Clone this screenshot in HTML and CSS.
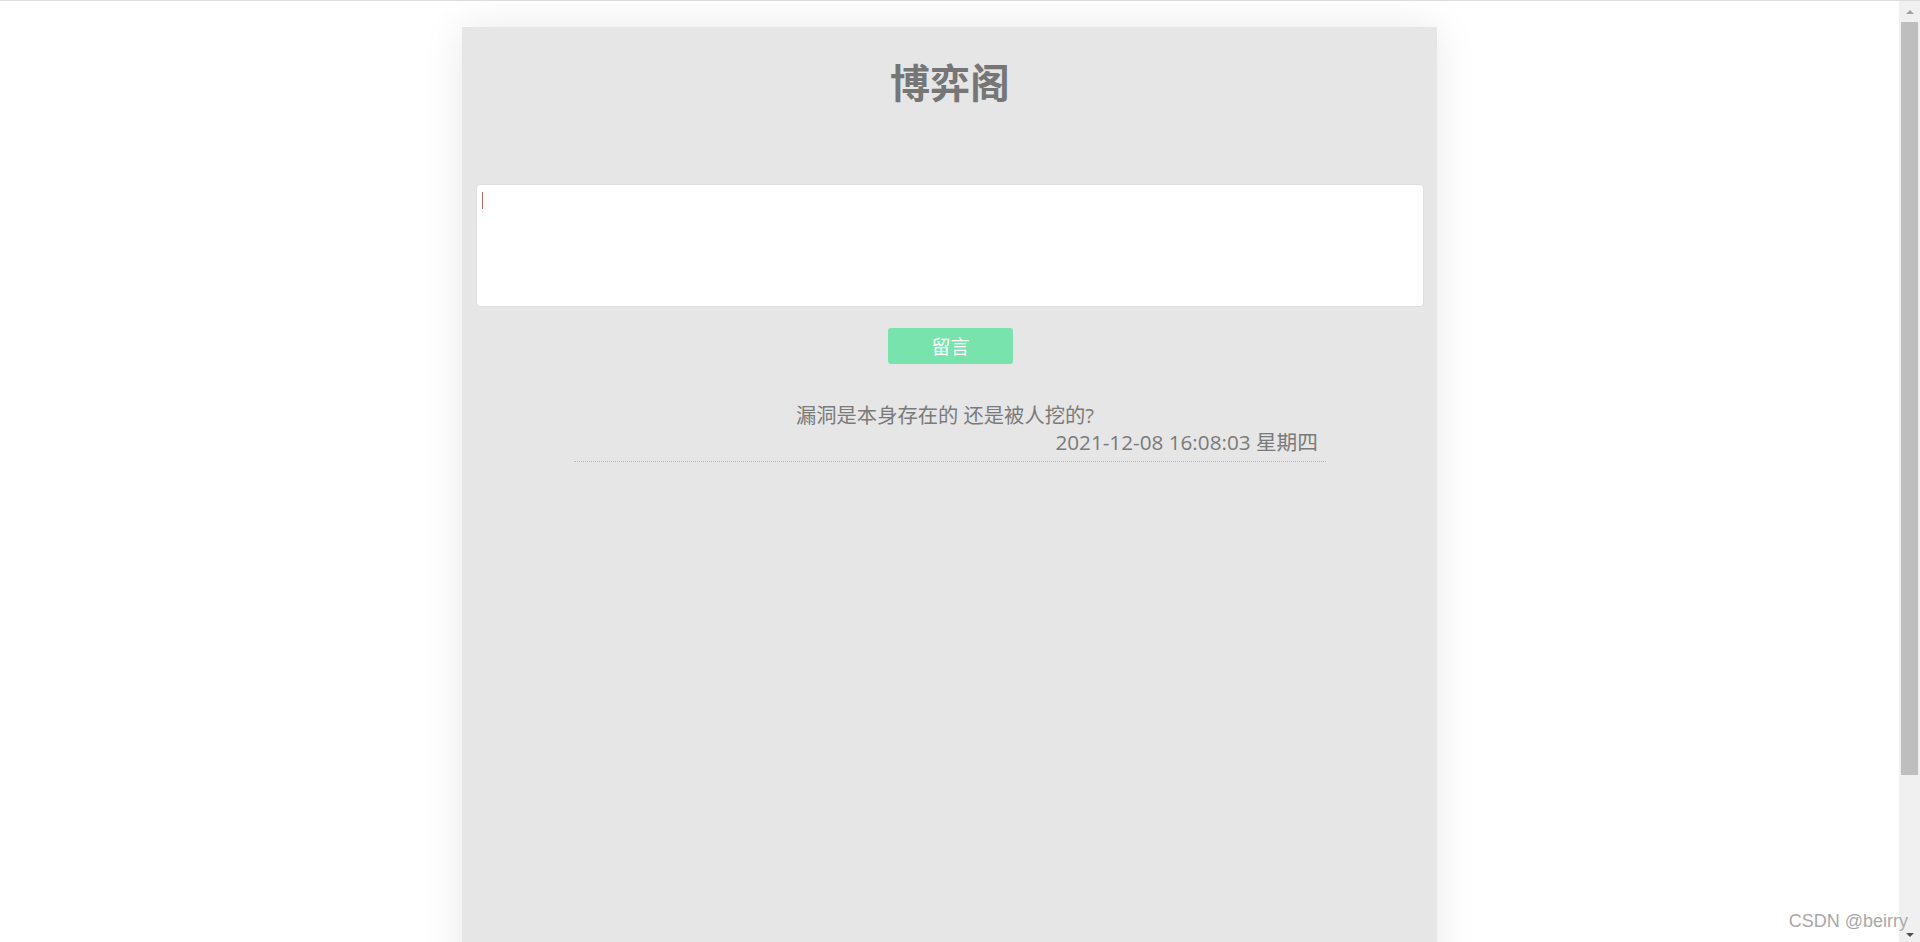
FILE: index.html
```html
<!DOCTYPE html>
<html lang="zh-CN">
<head>
<meta charset="utf-8">
<title>博弈阁</title>
<link rel="stylesheet" href="styles.css">
</head>
<body>
<div class="page">
  <main class="viewport">
    <section class="board">
      <h1 class="title">博弈阁</h1>
      <textarea class="editor" aria-label="留言内容"></textarea>
      <div class="actions"><button class="submit" type="button">留言</button></div>
      <ul class="messages">
        <li class="message">
          <p class="message-text">漏洞是本身存在的 还是被人挖的?</p>
          <p class="message-time">2021-12-08 16:08:03 星期四</p>
        </li>
      </ul>
    </section>
  </main>
  <div class="scrollbar" aria-hidden="true">
    <div class="sb-btn sb-up"><span class="tri-up"></span></div>
    <div class="sb-thumb"></div>
    <div class="sb-fill"></div>
    <div class="sb-btn sb-down"><span class="tri-down"></span></div>
  </div>
</div>
<div class="watermark">CSDN @beirry</div>
</body>
</html>
```

FILE: styles.css
```css
html, body {
  margin: 0;
  padding: 0;
  height: 100%;
  overflow: hidden;
  background: #ffffff;
}

body {
  font-family: "Noto Sans CJK SC", "Noto Sans", sans-serif;
  color: #777777;
}

.page {
  display: flex;
  height: 100vh;
  box-sizing: border-box;
  border-top: 1px solid #dcdcdc;
}

.viewport {
  flex: 1;
  overflow: hidden;
  padding-top: 26px;
}

.board {
  width: 975px;
  height: 1100px;
  margin: 0 auto;
  box-sizing: border-box;
  padding: 0 13px 0 14px;
  background: #e6e6e6;
  box-shadow: 0 0 40px rgba(0, 0, 0, 0.09);
  display: flex;
  flex-direction: column;
  align-items: stretch;
}

.title {
  margin: 26px 0 0;
  font-size: 40px;
  line-height: 56px;
  font-weight: 700;
  text-align: center;
  color: #767676;
}

.editor {
  display: block;
  margin-top: 75px;
  height: 123px;
  box-sizing: border-box;
  border: 1px solid #dedede;
  border-radius: 4px;
  background: #ffffff linear-gradient(#b86a6a, #b86a6a) no-repeat 5px 7px / 1px 17px;
  caret-color: transparent;
  resize: none;
  outline: none;
  font-family: inherit;
  font-size: 16px;
}

.actions {
  display: flex;
  justify-content: center;
  margin-top: 21px;
}

.submit {
  width: 125px;
  height: 36px;
  border: none;
  border-radius: 3px;
  background: #78e3ac;
  color: #ffffff;
  font-family: "Noto Sans CJK SC", sans-serif;
  font-size: 19px;
  line-height: 36px;
  padding: 0;
  margin-left: 1px;
}

.messages {
  list-style: none;
  margin: 38px auto 0;
  padding: 0;
  width: 752px;
}

.message {
  border-bottom: 1px dotted #b8b8b8;
  padding: 0 8px 5px;
  font-family: "Open Sans", "Noto Sans CJK SC", sans-serif;
}

.message-text {
  margin: 0;
  padding-right: 10px;
  font-size: 20.3px;
  line-height: 27px;
  text-align: center;
  color: #7a7a7a;
}

.message-time {
  margin: 0;
  font-size: 20.7px;
  line-height: 27px;
  text-align: right;
  color: #7a7a7a;
}

.scrollbar {
  width: 21px;
  background: #f0f0f0;
  display: flex;
  flex-direction: column;
  align-items: center;
}

.sb-btn {
  height: 21px;
  width: 100%;
  display: flex;
  align-items: center;
  justify-content: center;
}

.sb-thumb {
  width: 17px;
  height: 753px;
  background: #bebebe;
}

.sb-fill {
  flex: 1;
}

.tri-up {
  width: 0;
  height: 0;
  border-left: 4px solid transparent;
  border-right: 4px solid transparent;
  border-bottom: 4px solid #a3a3a3;
}

.tri-down {
  width: 0;
  height: 0;
  border-left: 4px solid transparent;
  border-right: 4px solid transparent;
  border-top: 4px solid #505050;
  margin-top: 6px;
}

.watermark {
  position: absolute;
  right: 12px;
  bottom: 10px;
  font-family: "Liberation Sans", Arial, sans-serif;
  font-size: 18px;
  color: #a8a8a8;
  text-shadow: 0 0 1px #ffffff;
}
```
